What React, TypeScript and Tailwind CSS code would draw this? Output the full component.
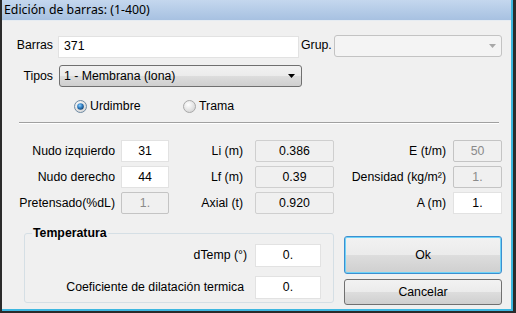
import React from "react";

const label = "text-[12.3px] leading-none text-black whitespace-nowrap";
const btnGrad =
  "bg-[linear-gradient(to_bottom,#f2f2f2_0%,#ebebeb_50%,#dddddd_51%,#cfcfcf_100%)]";

function Field({
  value,
  kind = "edit",
  className = "",
}: {
  value: string;
  kind?: "edit" | "readonly" | "disabled";
  className?: string;
}) {
  const look =
    kind === "edit"
      ? "bg-white border-[#e2e2e2] text-black"
      : kind === "readonly"
        ? "bg-[#f0f0f0] border-[#cfcfcf] text-black rounded-[2px]"
        : "bg-[#f0f0f0] border-[#c4c4c4] text-[#8a8a8a] rounded-[2px]";
  return (
    <div
      className={`h-[22px] border flex items-center justify-center text-[12.3px] ${look} ${className}`}
    >
      {value}
    </div>
  );
}

function Radio({ checked }: { checked: boolean }) {
  return (
    <svg width="13" height="13" viewBox="0 0 13 13">
      <defs>
        <radialGradient id="rfill" cx="0.4" cy="0.35" r="0.7">
          <stop offset="0" stopColor="#ffffff" />
          <stop offset="1" stopColor="#d4d4d4" />
        </radialGradient>
        <radialGradient id="rdot" cx="0.4" cy="0.35" r="0.7">
          <stop offset="0" stopColor="#8fd0ff" />
          <stop offset="0.5" stopColor="#2f7fc4" />
          <stop offset="1" stopColor="#103d6b" />
        </radialGradient>
      </defs>
      <circle cx="6.5" cy="6.5" r="6" fill="url(#rfill)" stroke={checked ? "#6e8aa3" : "#a9a9a9"} />
      {checked && <circle cx="6.5" cy="6.5" r="3.3" fill="url(#rdot)" />}
    </svg>
  );
}

function Row({
  l1,
  v1,
  k1,
  l2,
  v2,
  l3,
  v3,
  k3,
}: {
  l1: string;
  v1: string;
  k1: "edit" | "disabled";
  l2: string;
  v2: string;
  l3: string;
  v3: string;
  k3: "edit" | "disabled";
}) {
  return (
    <div className="flex items-center h-[22px]">
      <div className={`w-[113px] text-right ${label}`}>{l1}</div>
      <Field value={v1} kind={k1} className="ml-[6px] w-[48px]" />
      <div className={`w-[74px] text-right ${label}`}>{l2}</div>
      <Field value={v2} kind="readonly" className="ml-[12px] w-[79px]" />
      <div className={`w-[112px] text-right ${label}`}>{l3}</div>
      <Field value={v3} kind={k3} className="ml-[7px] w-[49px]" />
    </div>
  );
}

export default function App() {
  return (
    <div
      className="w-[516px] h-[313px] flex bg-[#2b2b2b] pl-[2px] pr-[3px] pb-[2px]"
      style={{ fontFamily: '"Liberation Sans", Arial, sans-serif' }}
    >
      <div className="flex-1 flex flex-col border-r-2 border-b-2 border-[#3db7e0]">
        {/* title bar */}
        <div className="h-[20px] flex items-center pl-[2px] bg-[linear-gradient(to_bottom,#c4d7ee,#a7c1e1)]">
          <span className="text-[12.3px] text-black" style={{ fontFamily: '"Noto Sans", sans-serif' }}>
            Edición de barras: (1-400)
          </span>
        </div>

        <div className="flex-1 flex flex-col bg-[#f0f0f0] border-t border-[#e6ecf2]">
          {/* Barras / Grup */}
          <div className="flex items-center h-[23px] mt-[13px]">
            <div className={`w-[51px] text-right ${label}`}>Barras</div>
            <div className="ml-[5px] w-[241px] h-[22px] mt-[2px] bg-white border border-[#e2e2e2] flex items-center pl-[5px] text-[12.3px] text-black">
              371
            </div>
            <div className={`ml-[2px] w-[33px] ${label}`}>Grup.</div>
            <div className="w-[168px] h-[22px] bg-[#f4f4f4] border border-[#c3c3c3] rounded-[3px] flex items-center justify-end pr-[5px]">
              <svg width="7" height="4" viewBox="0 0 7 4">
                <path d="M0 0h7L3.5 4z" fill="#a8a8a8" />
              </svg>
            </div>
          </div>

          {/* Tipos */}
          <div className="flex items-center h-[22px] mt-[8px]">
            <div className={`w-[51px] text-right ${label}`}>Tipos</div>
            <div
              className={`ml-[6px] w-[243px] h-[22px] border border-[#707070] rounded-[3px] flex items-center justify-between pl-[4px] pr-[6px] text-[12.3px] text-black ${btnGrad}`}
            >
              <span>1 - Membrana (lona)</span>
              <svg width="7" height="4" viewBox="0 0 7 4">
                <path d="M0 0h7L3.5 4z" fill="#000" />
              </svg>
            </div>
          </div>

          {/* radios */}
          <div className="flex items-center h-[16px] mt-[11px] pl-[72px]">
            <div className="w-[109px] flex items-center gap-[3px]">
              <Radio checked />
              <span className={label}>Urdimbre</span>
            </div>
            <div className="flex items-center gap-[3px]">
              <Radio checked={false} />
              <span className={label}>Trama</span>
            </div>
          </div>

          {/* separator */}
          <div className="ml-[17px] w-[480px] mt-[8px] border-t border-[#a0a0a0] border-b border-b-white" />

          {/* data rows */}
          <div className="flex flex-col gap-[4px] mt-[16px]">
            <Row l1="Nudo izquierdo" v1="31" k1="edit" l2="Li (m)" v2="0.386" l3="E (t/m)" v3="50" k3="disabled" />
            <Row l1="Nudo derecho" v1="44" k1="edit" l2="Lf (m)" v2="0.39" l3="Densidad (kg/m²)" v3="1." k3="disabled" />
            <Row l1="Pretensado(%dL)" v1="1." k1="disabled" l2="Axial (t)" v2="0.920" l3="A (m)" v3="1." k3="edit" />
          </div>

          {/* bottom */}
          <div className="flex mt-[19px]">
            <div className="relative ml-[22px] w-[310px] h-[70px] border border-[#d5dfe5] rounded-[3px] pt-[10px] pr-[12px] flex flex-col items-end">
              <span className="absolute left-[7px] -top-[7px] px-[1px] bg-[#f0f0f0] text-[12.3px] font-bold leading-none text-black">
                Temperatura
              </span>
              <div className="flex items-center">
                <span className={label}>dTemp (°)</span>
                <Field value="0." className="ml-[8px] w-[66px] h-[23px]" />
              </div>
              <div className="flex items-center mt-[9px]">
                <span className={label}>Coeficiente de dilatación termica</span>
                <Field value="0." className="ml-[11px] w-[66px] h-[23px]" />
              </div>
            </div>
            <div className="ml-[10px] w-[158px] flex flex-col mt-[3px]">
              <button
                className={`h-[38px] rounded-[3px] border border-[#3c8fd0] shadow-[inset_0_0_0_1px_#6fd3f7] text-[12.3px] text-black ${btnGrad}`}
              >
                Ok
              </button>
              <button
                className={`mt-[5px] h-[26px] rounded-[3px] border border-[#707070] text-[12.3px] text-black ${btnGrad}`}
              >
                Cancelar
              </button>
            </div>
          </div>
        </div>
      </div>
    </div>
  );
}
